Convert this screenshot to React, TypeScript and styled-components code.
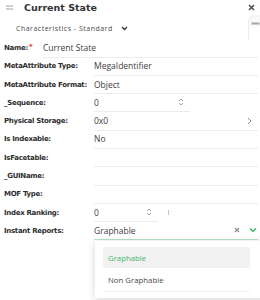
import styled, { createGlobalStyle } from "styled-components";

const GlobalStyle = createGlobalStyle`
    html, body {
        margin: 0;
        padding: 0;
        background: #fff;
    }
    * {
        box-sizing: border-box;
    }
`

type Field = {
    label: string;
    value?: string;
    kind?: "text" | "number" | "link" | "select";
    width?: number;
    handle?: boolean;
}

const fields: Field[] = [
    {label: "MetaAttribute Type:", value: "MegaIdentifier"},
    {label: "MetaAttribute Format:", value: "Object"},
    {label: "_Sequence:", value: "0", kind: "number", width: 96},
    {label: "Physical Storage:", value: "0x0", kind: "link"},
    {label: "Is Indexable:", value: "No"},
    {label: "IsFacetable:"},
    {label: "_GUIName:"},
    {label: "MOF Type:"},
    {label: "Index Ranking:", value: "0", kind: "number", width: 64, handle: true},
    {label: "Instant Reports:", value: "Graphable", kind: "select"},
]

const Spinner = () => (
    <svg width="6" height="10" viewBox="0 0 6 10">
        <path d="M1 4 L3 2 L5 4 M1 6 L3 8 L5 6" fill="none" stroke="#9a9a9a" strokeWidth="0.9"/>
    </svg>
)

const App = () => {
    return (
        <>
            <GlobalStyle/>
            <Panel>
                <Header>
                    <TitleWrap>
                        <svg width="7" height="5" viewBox="0 0 7 5">
                            <path d="M0 1 H7 M0 4 H7" stroke="#9aa0a8" strokeWidth="1"/>
                        </svg>
                        <Title>Current State</Title>
                    </TitleWrap>
                    <svg width="7" height="7" viewBox="0 0 7 7">
                        <path d="M1 1 L6 6 M6 1 L1 6" stroke="#4d5566" strokeWidth="1.7"/>
                    </svg>
                </Header>
                <SideTab>
                    <Bar/>
                </SideTab>
                <ViewSelector>
                    <ViewName>Characteristics - Standard</ViewName>
                    <svg width="7" height="5" viewBox="0 0 7 5">
                        <path d="M1 1 L3.5 3.5 L6 1" fill="none" stroke="#333" strokeWidth="1.3"/>
                    </svg>
                </ViewSelector>
                <Form>
                    <Row $labelWidth={39}>
                        <Label>Name:<Required>*</Required></Label>
                        <Value>Current State</Value>
                    </Row>
                    {fields.map((f) => (
                        <Row key={f.label} $labelWidth={90}>
                            <Label>{f.label}</Label>
                            <ValueWrap>
                                <Value $width={f.width} $active={f.kind === "select"}>
                                    <span>{f.value}</span>
                                    {f.kind === "number" && <Spinner/>}
                                    {f.kind === "link" && (
                                        <svg width="5" height="8" viewBox="0 0 5 8">
                                            <path d="M1 1 L4 4 L1 7" fill="none" stroke="#8a8a8a" strokeWidth="1"/>
                                        </svg>
                                    )}
                                    {f.kind === "select" && (
                                        <Actions>
                                            <svg width="6" height="6" viewBox="0 0 6 6">
                                                <path d="M1 1 L5 5 M5 1 L1 5" stroke="#8c8c8c" strokeWidth="1.2"/>
                                            </svg>
                                            <svg width="8" height="6" viewBox="0 0 8 6">
                                                <path d="M1 1.5 L4 4.5 L7 1.5" fill="none" stroke="#3cb56b" strokeWidth="1.5"/>
                                            </svg>
                                        </Actions>
                                    )}
                                </Value>
                                {f.handle && <Handle/>}
                            </ValueWrap>
                        </Row>
                    ))}
                </Form>
                <Dropdown>
                    <Option $selected>Graphable</Option>
                    <Option>Non Graphable</Option>
                </Dropdown>
            </Panel>
        </>
    );
};

export default App;

const Panel = styled.div`
    position: relative;
    width: 260px;
    height: 300px;
    overflow: hidden;
    background: #fff;
    font-family: "Open Sans", "Liberation Sans", sans-serif;
`

const Header = styled.div`
    display: flex;
    justify-content: space-between;
    align-items: center;
    height: 15px;
    padding: 0 5px 0 6px;
`

const TitleWrap = styled.div`
    display: flex;
    align-items: center;
    gap: 11px;
`

const Title = styled.h1`
    margin: 0;
    font-family: "DejaVu Sans", Verdana, sans-serif;
    font-weight: 700;
    font-size: 9.5px;
    color: #2f3338;
`

const SideTab = styled.div`
    position: absolute;
    right: 0;
    top: 15px;
    width: 12px;
    height: 25px;
    border-left: 1px solid #ececec;
    border-top-left-radius: 6px;
    background: linear-gradient(#f6f6f6, #fff 60%);
    padding: 7px 0 0 2px;
`

const Bar = styled.div`
    width: 9px;
    height: 3px;
    border-radius: 1px;
    background: #a8a8a8;
    border: 1px solid #cfcfcf;
`

const ViewSelector = styled.div`
    display: flex;
    align-items: center;
    gap: 8px;
    height: 12px;
    margin-top: 7px;
    padding-left: 16px;
`

const ViewName = styled.span`
    font-size: 7px;
    letter-spacing: 0.5px;
    color: #4a4a4a;
`

const Form = styled.div`
    margin-top: 5.5px;
`

const Row = styled.div<{ $labelWidth: number }>`
    display: grid;
    grid-template-columns: ${(p) => p.$labelWidth}px 1fr;
    height: 18.3px;
    padding: 0 2px 0 4px;
`

const Label = styled.label`
    display: flex;
    align-items: center;
    height: 17px;
    font-family: "DejaVu Sans", Verdana, sans-serif;
    font-weight: 700;
    font-size: 7px;
    letter-spacing: -0.3px;
    color: #2e2e2e;
    white-space: nowrap;
`

const Required = styled.sup`
    color: #e0301e;
    font-size: 7px;
    margin-left: 1px;
    position: relative;
    top: -1px;
`

const ValueWrap = styled.div`
    display: flex;
    align-items: flex-start;
`

const Value = styled.div<{ $width?: number; $active?: boolean }>`
    display: flex;
    align-items: center;
    justify-content: space-between;
    height: 18px;
    padding-bottom: 1px;
    width: ${(p) => (p.$width ? `${p.$width}px` : "100%")};
    border-bottom: 1px solid ${(p) => (p.$active ? "#b6e2c6" : "#ececec")};
    font-size: 8.5px;
    color: #404040;
    padding-right: ${(p) => (p.$active ? "1px" : "6px")};
`

const Actions = styled.div`
    display: flex;
    align-items: center;
    gap: 9px;
`

const Handle = styled.div`
    width: 1px;
    height: 5px;
    margin: 6px 0 0 10px;
    background: #c4c4c4;
`

const Dropdown = styled.div`
    position: absolute;
    left: 95px;
    top: 241px;
    width: 175px;
    padding: 6px 20px 6px 8px;
    background: #fff;
    box-shadow: 0 2px 8px rgba(0, 0, 0, 0.16);
`

const Option = styled.div<{ $selected?: boolean }>`
    display: flex;
    align-items: center;
    height: ${(p) => (p.$selected ? "21px" : "23px")};
    padding-left: 5px;
    border-radius: 2px;
    font-size: 7.8px;
    color: ${(p) => (p.$selected ? "#45b56f" : "#4a4a4a")};
    background: ${(p) => (p.$selected ? "#f2f2f2" : "transparent")};
    border-bottom: ${(p) => (p.$selected ? "none" : "1px solid #eeeeee")};
    margin-top: ${(p) => (p.$selected ? "0" : "1px")};
`
